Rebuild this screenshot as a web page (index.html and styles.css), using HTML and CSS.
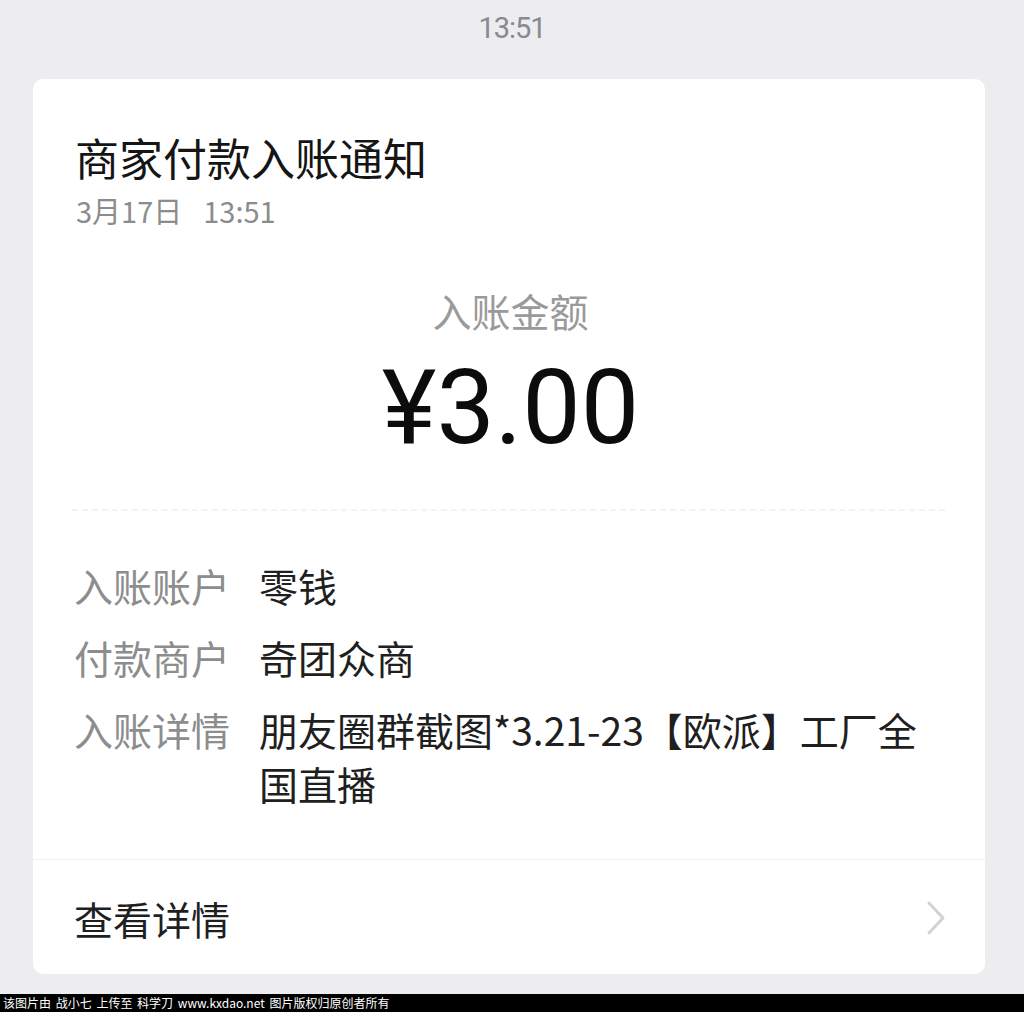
FILE: index.html
```
<!DOCTYPE html>
<html lang="zh-CN">
<head>
<meta charset="utf-8">
<link rel="stylesheet" href="styles.css">
</head>
<body>
<div class="page">
  <div class="status">13:51</div>
  <div class="card">
    <div class="head">
      <div class="title">商家付款入账通知</div>
      <div class="date">3月17日&nbsp;&nbsp;13:51</div>
      <div class="amount-label">入账金额</div>
      <div class="amount">¥3.00</div>
      <div class="dash"></div>
      <div class="rows">
        <div class="row"><div class="label">入账账户</div><div class="value">零钱</div></div>
        <div class="row"><div class="label">付款商户</div><div class="value">奇团众商</div></div>
        <div class="row"><div class="label">入账详情</div><div class="value">朋友圈群截图*3.21-23【欧派】工厂全国直播</div></div>
      </div>
    </div>
    <div class="footer">
      <span class="footer-text">查看详情</span>
      <svg class="chev" width="22" height="36" viewBox="0 0 22 36"><polyline points="4,3 18,18 4,33" fill="none" stroke="#d2d2d4" stroke-width="3" stroke-linecap="round" stroke-linejoin="round"/></svg>
    </div>
  </div>
  <div class="spacer"></div>
  <div class="watermark">该图片由 战小七 上传至 科学刀 www.kxdao.net 图片版权归原创者所有</div>
</div>
</body>
</html>
```
FILE: styles.css
```
html, body {
  margin: 0;
  padding: 0;
  background: #edecef;
}
body {
  font-family: "Noto Sans CJK SC", "Noto Sans", sans-serif;
}
.page {
  width: 1024px;
  height: 1012px;
  overflow: hidden;
  display: flex;
  flex-direction: column;
}
.status {
  height: 79px;
  line-height: 56px;
  text-align: center;
  font-family: Roboto, "Noto Sans", sans-serif;
  font-size: 29px;
  color: #8a898d;
  letter-spacing: -1px;
}
.card {
  margin-left: 33px;
  width: 952px;
  height: 895px;
  background: #ffffff;
  border-radius: 10px;
  display: flex;
  flex-direction: column;
}
.head {
  padding: 52px 40px 0 43px;
  display: flex;
  flex-direction: column;
  border-bottom: 1px solid #f1f0f3;
  height: 781px;
  box-sizing: border-box;
  flex: none;
}
.title {
  font-size: 44px;
  line-height: 52px;
  color: #151515;
  margin-left: -1px;
}
.date {
  margin-top: 9px;
  font-size: 29px;
  line-height: 36px;
  color: #8c8c8c;
  word-spacing: 4px;
}
.amount-label {
  margin-top: 58px;
  text-align: center;
  font-size: 39px;
  line-height: 48px;
  color: #9a9a9a;
}
.amount {
  margin-top: 14px;
  text-align: center;
  font-family: Roboto, "Liberation Sans", sans-serif;
  font-size: 104px;
  line-height: 120px;
  color: #0c0c0c;
}
.dash {
  margin-top: 41px;
  margin-left: -4px;
  border-top: 2px dashed #f3f2f4;
}
.rows {
  margin-top: 47px;
  display: flex;
  flex-direction: column;
  gap: 18px;
}
.row {
  display: flex;
  font-size: 39px;
  line-height: 54px;
}
.label {
  width: 183px;
  flex: none;
  color: #8d8d8d;
  margin-left: -2px;
}
.value {
  width: 672px;
  color: #1f1f1f;
  margin-left: 2px;
}
.footer {
  flex: 1;
  display: flex;
  align-items: center;
  justify-content: space-between;
  padding: 0 38px 0 43px;
}
.footer-text {
  font-size: 39px;
  line-height: 54px;
  color: #1f1f1f;
  margin-top: 2px;
  margin-left: -2px;
}
.chev {
  display: block;
  margin-top: 2px;
}
.spacer {
  height: 20px;
}
.watermark {
  height: 18px;
  background: #000;
  color: #fff;
  font-size: 12px;
  line-height: 18px;
  padding-left: 3px;
  white-space: nowrap;
  word-spacing: 2px;
}
```
